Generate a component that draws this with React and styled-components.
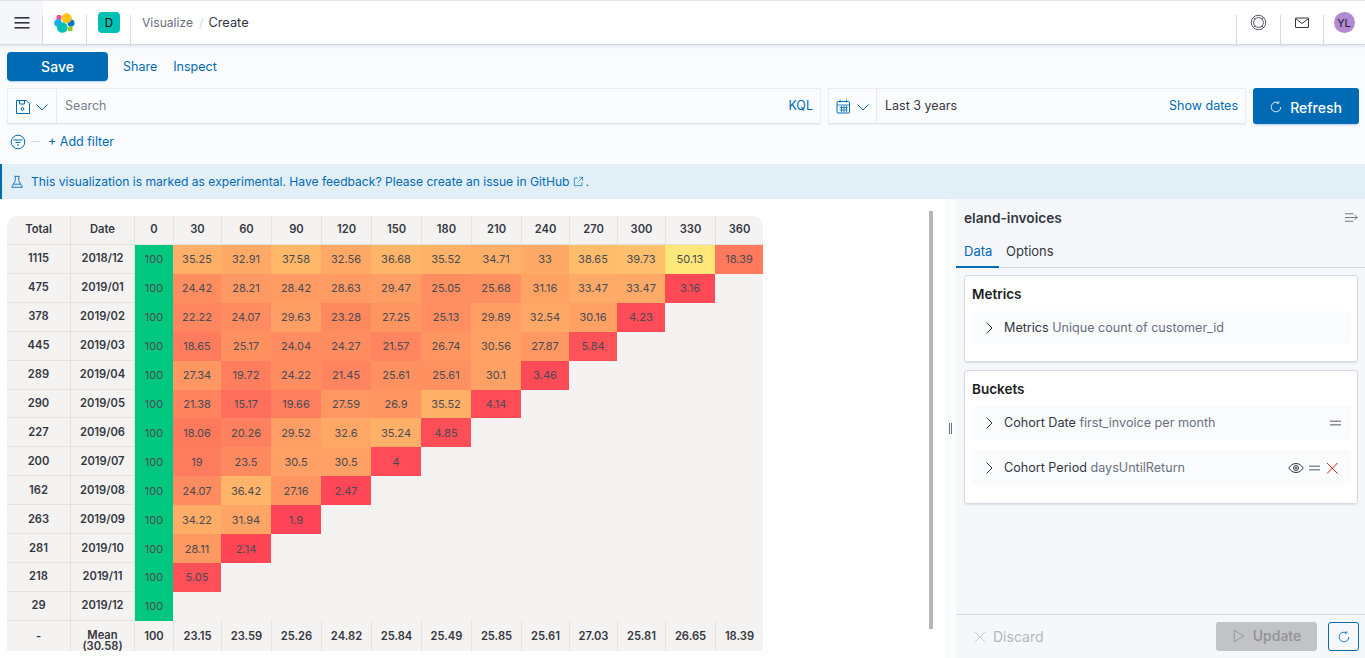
import React from 'react';
import styled, {createGlobalStyle} from 'styled-components';

const GlobalStyle = createGlobalStyle`
html, body {
    margin: 0;
    padding: 0;
    height: 100%;
    overflow: hidden;
    background: #fff;
    font-family: Inter, "Noto Sans", sans-serif;
    color: #343741;
}
* { box-sizing: border-box; }
`;

const COLUMNS = ['0', '30', '60', '90', '120', '150', '180', '210', '240', '270', '300', '330', '360'];

const ROWS = [
    ['1115', '2018/12', [100, 35.25, 32.91, 37.58, 32.56, 36.68, 35.52, 34.71, 33, 38.65, 39.73, 50.13, 18.39]],
    ['475', '2019/01', [100, 24.42, 28.21, 28.42, 28.63, 29.47, 25.05, 25.68, 31.16, 33.47, 33.47, 3.16]],
    ['378', '2019/02', [100, 22.22, 24.07, 29.63, 23.28, 27.25, 25.13, 29.89, 32.54, 30.16, 4.23]],
    ['445', '2019/03', [100, 18.65, 25.17, 24.04, 24.27, 21.57, 26.74, 30.56, 27.87, 5.84]],
    ['289', '2019/04', [100, 27.34, 19.72, 24.22, 21.45, 25.61, 25.61, 30.1, 3.46]],
    ['290', '2019/05', [100, 21.38, 15.17, 19.66, 27.59, 26.9, 35.52, 4.14]],
    ['227', '2019/06', [100, 18.06, 20.26, 29.52, 32.6, 35.24, 4.85]],
    ['200', '2019/07', [100, 19, 23.5, 30.5, 30.5, 4]],
    ['162', '2019/08', [100, 24.07, 36.42, 27.16, 2.47]],
    ['263', '2019/09', [100, 34.22, 31.94, 1.9]],
    ['281', '2019/10', [100, 28.11, 2.14]],
    ['218', '2019/11', [100, 5.05]],
    ['29', '2019/12', [100]],
];

const MEANS = ['100', '23.15', '23.59', '25.26', '24.82', '25.84', '25.49', '25.85', '25.61', '27.03', '25.81', '26.65', '18.39'];

const STOPS = [
    [1.9, [255, 69, 87]],
    [25, [255, 143, 96]],
    [40, [255, 192, 108]],
    [50.13, [255, 232, 121]],
    [100, [0, 199, 127]],
];

const heatColor = (value) => {
    let index = 0;
    while (index < STOPS.length - 2 && value > STOPS[index + 1][0]) {
        index++;
    }
    const [fromValue, from] = STOPS[index];
    const [toValue, to] = STOPS[index + 1];
    const ratio = (value - fromValue) / (toValue - fromValue);
    const channels = from.map((channel, i) => Math.round(channel + (to[i] - channel) * ratio));
    return `rgb(${channels.join(',')})`;
};

const Icon = ({size = 16, color = 'currentColor', width = 1, children}) => (
    <svg width={size} height={size} viewBox="0 0 16 16" fill="none" stroke={color} strokeWidth={width} style={{display: 'block', flex: 'none'}}>
        {children}
    </svg>
);

const Chevron = ({color}) => (
    <Icon color={color} size={16}><path d="M2.500 5.500l5.500 5.500 5.500-5.500"/></Icon>
);

const ChevronRight = () => (
    <Icon color="#343741" size={16}><path d="M5.500 2.500l5.500 5.500-5.500 5.500"/></Icon>
);

const RefreshIcon = ({color}) => (
    <Icon color={color} size={14}><path d="M13.500 8a5.500 5.500 0 1 1-3-4.900"/><path d="M11.200 1.200v2.600H8.800" strokeWidth="0.800"/></Icon>
);

const Logo = () => (
    <svg width="22" height="22" viewBox="0 0 22 22" style={{display: 'block'}}>
        <rect x="2.500" y="3" width="5" height="5" rx="1.500" fill="#F04E98"/>
        <rect x="14" y="14.500" width="4.500" height="4.500" rx="1" fill="#93C90E"/>
        <circle cx="4" cy="11" r="3.800" fill="#1BA9F5"/>
        <circle cx="17" cy="11" r="3.500" fill="#0077CC"/>
        <circle cx="12.700" cy="6.200" r="5" fill="#FEC514"/>
        <circle cx="8.300" cy="15.500" r="5.300" fill="#00BFB3"/>
    </svg>
);

const Page = styled.div`
height: 100vh;
display: flex;
flex-direction: column;
overflow: hidden;
`;

const Header = styled.header`
height: 45px;
flex: none;
display: flex;
align-items: stretch;
background: #fff;
border-top: 1px solid #e0e4ea;
border-bottom: 1px solid #d3dae6;
box-shadow: 0 1px 3px rgba(152, 162, 179, .35);
position: relative;
z-index: 1;
`;

const HeaderCell = styled.div`
width: ${props => props.$width || 44}px;
display: flex;
align-items: center;
justify-content: center;
background: ${props => props.$shaded ? '#f5f7fa' : 'transparent'};
position: relative;
&::${props => props.$right ? 'before' : 'after'} {
    content: '';
    position: absolute;
    ${props => props.$right ? 'left: 0;' : 'right: 0;'}
    top: 14px;
    bottom: 0;
    width: 1px;
    background: #d3dae6;
}
`;

const Crumbs = styled.nav`
flex: 1;
display: flex;
align-items: center;
padding: 0 0 0 11px;
font-size: 12.1px;
color: #69707d;
`;

const CrumbSeparator = styled.span`
margin: 0 5px 0 6px;
color: #d3dae6;
`;

const CrumbCurrent = styled.span`
font-size: 12.8px;
color: #343741;
`;

const SpaceBadge = styled.div`
width: 22px;
height: 21px;
border-radius: 4px;
background: #00bfb3;
color: #000;
font-size: 11.5px;
display: flex;
align-items: center;
justify-content: center;
`;

const Avatar = styled.div`
width: 21px;
height: 21px;
border-radius: 50%;
background: #b389cf;
color: #1a1a2a;
font-size: 11px;
display: flex;
align-items: center;
justify-content: center;
`;

const TopBar = styled.section`
height: 119px;
flex: none;
background: #fafbfd;
padding: 7px 6px 0 7px;
display: flex;
flex-direction: column;
`;

const MenuRow = styled.div`
display: flex;
align-items: center;
height: 29px;
`;

const SaveButton = styled.button`
width: 101px;
height: 29px;
border: 0;
border-radius: 4px;
background: #006bb4;
color: #fff;
font: 500 14px Inter, sans-serif;
box-shadow: 0 2px 2px -1px rgba(0, 107, 180, .3);
margin-right: 15px;
`;

const LinkText = styled.a`
color: #006bb4;
font-size: 12.5px;
margin-right: ${props => props.$gap || 0}px;
margin-bottom: ${props => props.$lift ? 1 : 0}px;
`;

const QueryRow = styled.div`
display: flex;
height: 36px;
margin-top: 7px;
`;

const Field = styled.div`
display: flex;
align-items: stretch;
width: ${props => props.$width}px;
margin-right: ${props => props.$gap || 0}px;
background: #fbfcfd;
border: 1px solid #eaedf3;
border-bottom-color: #dfe3ec;
box-shadow: 0 1px 1px rgba(152, 162, 179, .12);
font-size: 12.5px;
`;

const FieldPrepend = styled.div`
width: ${props => props.$width || 49}px;
flex: none;
display: flex;
align-items: center;
justify-content: center;
gap: 3px;
border-right: 1px solid #e6e9f0;
padding: 1px 0 0 1px;
`;

const FieldBody = styled.div`
flex: 1;
display: flex;
align-items: center;
justify-content: space-between;
padding: 0 7px 2px 8px;
color: ${props => props.$muted ? '#7b818c' : '#343741'};
`;

const RefreshButton = styled.button`
width: 106px;
height: 36px;
border: 0;
border-radius: 3px;
background: #006bb4;
color: #fff;
font: 500 14px Inter, sans-serif;
display: flex;
align-items: center;
justify-content: center;
gap: 7px;
padding: 2px 1px 0 0;
box-shadow: 0 2px 2px -1px rgba(0, 107, 180, .3);
`;

const FilterRow = styled.div`
display: flex;
align-items: center;
height: 17px;
margin-top: 9px;
padding-left: 3px;
`;

const FilterDash = styled.span`
width: 9px;
height: 1px;
background: #d3dae6;
margin: 0 8px 0 5px;
`;

const Callout = styled.div`
height: 35px;
flex: none;
display: flex;
align-items: center;
gap: 7px;
background: #e3eff7;
border-left: 2px solid #006bb4;
padding-left: 8px;
font-size: 12.1px;
color: #006bb4;
`;

const CalloutLink = styled.span`
display: inline-flex;
align-items: center;
gap: 3px;
margin-right: 2px;
`;

const Workspace = styled.main`
flex: 1;
min-height: 0;
display: flex;
`;

const Canvas = styled.div`
width: 945px;
flex: none;
display: flex;
padding: 12px 12px 0 7px;
justify-content: space-between;
background: #fff;
`;

const Cohort = styled.div`
width: 756px;
height: 435px;
margin-top: 5px;
display: grid;
grid-template-columns: 63px 64px 39px 48px 50px 50px 50px 50px 50px 50px 48px 48px 48px 50px 48px;
grid-template-rows: 29px repeat(13, 28.92px) 30px;
background: #f4f3f2;
border-radius: 10px 10px 0 0;
overflow: hidden;
font-size: 11.2px;
color: #343741;
`;

const HeadCell = styled.div`
display: flex;
align-items: center;
justify-content: center;
font-weight: 600;
border-left: ${props => props.$first ? 0 : '1px solid #e2e2e1'};
border-bottom: 1px solid #e2e2e1;
padding-bottom: ${props => props.$top ? 2 : 1}px;
`;

const FootCell = styled.div`
display: flex;
align-items: center;
justify-content: center;
text-align: center;
font-weight: 600;
line-height: 10.5px;
border-left: ${props => props.$first ? 0 : '1px solid #e2e2e1'};
padding-top: ${props => props.$wrapped ? 10 : 0}px;
`;

const HeatCell = styled.div`
display: flex;
align-items: center;
justify-content: center;
font-size: 11px;
color: #4a4a52;
border-left: ${props => props.$first ? '1px solid #e2e2e1' : 0};
`;

const ScrollThumb = styled.div`
width: 4px;
height: 418px;
background: #b4b6bc;
align-self: flex-start;
`;

const Sidebar = styled.aside`
flex: 1;
display: flex;
background: #f5f7fa;
`;

const ResizeStrip = styled.div`
width: 11px;
flex: none;
background: #fafbfd;
display: flex;
align-items: center;
justify-content: center;
gap: 1px;
padding-bottom: 1px;
`;

const ResizeBar = styled.span`
width: 1px;
height: 11px;
background: #69707d;
`;

const SidebarBody = styled.div`
flex: 1;
display: flex;
flex-direction: column;
min-width: 0;
`;

const SidebarTitle = styled.div`
display: flex;
align-items: center;
justify-content: space-between;
height: 39px;
padding: 0 6px 2px 8px;
font-size: 13.7px;
font-weight: 600;
color: #343741;
`;

const Tabs = styled.div`
display: flex;
height: 30px;
border-bottom: 1px solid #d3dae6;
font-size: 13px;
`;

const Tab = styled.div`
padding: 5px ${props => props.$active ? 7 : 0}px 0 ${props => props.$active ? 8 : 7}px;
margin-bottom: -1px;
width: ${props => props.$active ? '43px' : 'auto'};
color: ${props => props.$active ? '#006bb4' : '#343741'};
border-bottom: 2px solid ${props => props.$active ? '#006bb4' : 'transparent'};
`;

const Cards = styled.div`
flex: 1;
padding: 7px 7px 0 8px;
display: flex;
flex-direction: column;
gap: 8px;
`;

const Card = styled.section`
height: ${props => props.$height}px;
background: #fff;
border: 1px solid #d3dae6;
border-radius: 3px;
box-shadow: 0 2px 2px -1px rgba(152, 162, 179, .3);
padding: 8px 6px 0 7px;
`;

const CardTitle = styled.h3`
margin: 0;
font-size: 13.5px;
line-height: 20px;
font-weight: 600;
color: #1a1c21;
height: 27px;
`;

const AggRow = styled.div`
height: ${props => props.$height || 33}px;
display: flex;
align-items: center;
margin-bottom: 11px;
padding: 0 ${props => props.$end || 8}px 0 9px;
background: #fafbfd;
border-radius: 3px;
font-size: 12.6px;
color: #69707d;
gap: 7px;
`;

const AggName = styled.span`
color: #343741;
`;

const AggActions = styled.div`
margin-left: auto;
display: flex;
align-items: center;
gap: 2px;
`;

const Footer = styled.div`
height: 44px;
flex: none;
display: flex;
align-items: flex-start;
padding: 7px 6px 0 18px;
border-top: 1px solid #d3dae6;
`;

const Discard = styled.div`
display: flex;
align-items: center;
gap: 7px;
height: 29px;
font-size: 14px;
color: #b5b8bf;
margin-right: auto;
`;

const UpdateButton = styled.button`
width: 101px;
height: 29px;
border: 0;
border-radius: 3px;
background: #c2c3c6;
color: #8f9198;
font: 500 14px Inter, sans-serif;
display: flex;
align-items: center;
justify-content: center;
gap: 7px;
padding: 0 0 2px;
margin-right: 11px;
`;

const SmallRefresh = styled.button`
width: 31px;
height: 29px;
background: #f5f7fa;
border: 1px solid #006bb4;
border-radius: 3px;
display: flex;
align-items: center;
justify-content: center;
padding: 0;
`;

const DragHandle = () => (
    <Icon color="#8a8f99" size={16} width={1.400}><path d="M3 6.200h11M3 9.800h11"/></Icon>
);

const App = () => (
    <Page>
        <GlobalStyle/>
        <Header>
            <HeaderCell $width={43} $shaded>
                <svg width="16" height="14" viewBox="0 0 16 14" fill="#343741" style={{display: 'block'}}>
                    <rect x="0.500" y="1" width="15" height="1.600"/>
                    <rect x="0.500" y="6" width="15" height="1.600"/>
                    <rect x="0.500" y="11" width="15" height="1.600"/>
                </svg>
            </HeaderCell>
            <HeaderCell $width={44}><Logo/></HeaderCell>
            <HeaderCell $width={44}><SpaceBadge>D</SpaceBadge></HeaderCell>
            <Crumbs>
                Visualize<CrumbSeparator>/</CrumbSeparator><CrumbCurrent>Create</CrumbCurrent>
            </Crumbs>
            <HeaderCell $width={44} $right>
                <Icon color="#4a4f5a" size={17} width={0.900}>
                    <circle cx="8" cy="8" r="6.800"/>
                    <circle cx="8" cy="8" r="4.600"/>
                    <path d="M3.200 3.200l1.600 1.600M12.800 3.200l-1.600 1.600M3.200 12.800l1.600-1.600M12.800 12.800l-1.600-1.600"/>
                </Icon>
            </HeaderCell>
            <HeaderCell $width={43} $right>
                <Icon color="#343741" size={16}>
                    <rect x="1.500" y="3" width="13" height="9.500" rx="0.500"/>
                    <path d="M1.500 3.500l6.500 5 6.500-5"/>
                </Icon>
            </HeaderCell>
            <HeaderCell $width={42} $right><Avatar>YL</Avatar></HeaderCell>
        </Header>

        <TopBar>
            <MenuRow>
                <SaveButton>Save</SaveButton>
                <LinkText $gap={16} $lift>Share</LinkText>
                <LinkText $lift>Inspect</LinkText>
            </MenuRow>
            <QueryRow>
                <Field $width={814} $gap={7}>
                    <FieldPrepend>
                        <Icon color="#006bb4" size={16}>
                            <path d="M1.500 1.500h9.500l3.500 3v10h-13z"/>
                            <path d="M4.500 1.500v3.500h5v-3.500"/>
                            <circle cx="7.500" cy="10" r="1.400"/>
                        </Icon>
                        <Chevron color="#006bb4"/>
                    </FieldPrepend>
                    <FieldBody $muted>
                        Search
                        <LinkText>KQL</LinkText>
                    </FieldBody>
                </Field>
                <Field $width={418} $gap={7}>
                    <FieldPrepend $width={48}>
                        <Icon color="#006bb4" size={16}>
                            <rect x="1" y="2.500" width="12.500" height="11.500" rx="1"/>
                            <path d="M1 6h12.500M4 .5v3M10.500 .5v3M3.500 8.500h8M3.500 11h8M5.500 6.500v6.500M8 6.500v6.500M10.500 6.500v6.500" strokeWidth="0.800"/>
                        </Icon>
                        <Chevron color="#006bb4"/>
                    </FieldPrepend>
                    <FieldBody>
                        Last 3 years
                        <LinkText>Show dates</LinkText>
                    </FieldBody>
                </Field>
                <RefreshButton><RefreshIcon color="#fff"/>Refresh</RefreshButton>
            </QueryRow>
            <FilterRow>
                <Icon color="#006bb4" size={16}>
                    <circle cx="8" cy="8" r="6.800"/>
                    <path d="M3.500 6h9M5.500 8.500h5M7 11h2"/>
                </Icon>
                <FilterDash/>
                <LinkText $lift>+ Add filter</LinkText>
            </FilterRow>
        </TopBar>

        <Callout>
            <Icon color="#006bb4" size={14}>
                <path d="M5 1.500h6M6 1.500v5l-4 7.500h12l-4-7.500v-5M4 10.500h8"/>
            </Icon>
            <span>
                This visualization is marked as experimental. Have feedback? Please create an issue in{' '}
                <CalloutLink>
                    GitHub
                    <Icon color="#006bb4" size={11}>
                        <path d="M7 3H2v11h11V9M9 2h5v5M14 2L7 9"/>
                    </Icon>
                </CalloutLink>
                .
            </span>
        </Callout>

        <Workspace>
            <Canvas>
                <Cohort>
                    <HeadCell $top $first>Total</HeadCell>
                    <HeadCell $top>Date</HeadCell>
                    {COLUMNS.map((col) => (
                        <HeadCell key={col} $top>{col}</HeadCell>
                    ))}
                    {ROWS.map(([total, date, values]) => (
                        <React.Fragment key={date}>
                            <HeadCell $first>{total}</HeadCell>
                            <HeadCell>{date}</HeadCell>
                            {COLUMNS.map((col, i) => (
                                i < values.length
                                    ? <HeatCell key={col} $first={i === 0} style={{background: heatColor(values[i])}}>{values[i]}</HeatCell>
                                    : <div key={col}/>
                            ))}
                        </React.Fragment>
                    ))}
                    <FootCell $first>-</FootCell>
                    <FootCell $wrapped>Mean<br/>(30.58)</FootCell>
                    {MEANS.map((mean, i) => (
                        <FootCell key={i}>{mean}</FootCell>
                    ))}
                </Cohort>
                <ScrollThumb/>
            </Canvas>
            <Sidebar>
                <ResizeStrip>
                    <ResizeBar/>
                    <ResizeBar/>
                </ResizeStrip>
                <SidebarBody>
                    <SidebarTitle>
                        eland-invoices
                        <Icon color="#69707d" size={15}>
                            <path d="M1 4h9M1 8h13M1 12h9M11.500 5.500l2.500 2.500-2.500 2.500"/>
                        </Icon>
                    </SidebarTitle>
                    <Tabs>
                        <Tab $active>Data</Tab>
                        <Tab>Options</Tab>
                    </Tabs>
                    <Cards>
                        <Card $height={87}>
                            <CardTitle>Metrics</CardTitle>
                            <AggRow>
                                <ChevronRight/>
                                <span><AggName>Metrics</AggName> Unique count of customer_id</span>
                            </AggRow>
                        </Card>
                        <Card $height={134}>
                            <CardTitle>Buckets</CardTitle>
                            <AggRow>
                                <ChevronRight/>
                                <span><AggName>Cohort Date</AggName> first_invoice per month</span>
                                <AggActions>
                                    <DragHandle/>
                                </AggActions>
                            </AggRow>
                            <AggRow $height={35} $end={11}>
                                <ChevronRight/>
                                <span><AggName>Cohort Period</AggName> daysUntilReturn</span>
                                <AggActions>
                                    <Icon color="#343741" size={16}>
                                        <path d="M.8 8c2-3 4.500-4.500 7.200-4.500S13.200 5 15.200 8c-2 3-4.500 4.500-7.200 4.500S2.800 11 .8 8z"/>
                                        <circle cx="8" cy="8" r="2.500"/>
                                        <circle cx="8" cy="8" r="0.800"/>
                                    </Icon>
                                    <DragHandle/>
                                    <Icon color="#d5281e" size={16}><path d="M3 3l10.500 10.500M13.500 3L3 13.500"/></Icon>
                                </AggActions>
                            </AggRow>
                        </Card>
                    </Cards>
                    <Footer>
                        <Discard>
                            <Icon color="#b5b8bf" size={12}><path d="M1.500 1.500l13 13M14.500 1.500l-13 13"/></Icon>
                            Discard
                        </Discard>
                        <UpdateButton>
                            <Icon color="#8f9198" size={14}><path d="M2.500 1.500l11 6.500-11 6.500z"/></Icon>
                            Update
                        </UpdateButton>
                        <SmallRefresh><RefreshIcon color="#006bb4"/></SmallRefresh>
                    </Footer>
                </SidebarBody>
            </Sidebar>
        </Workspace>
    </Page>
);

export default App;
